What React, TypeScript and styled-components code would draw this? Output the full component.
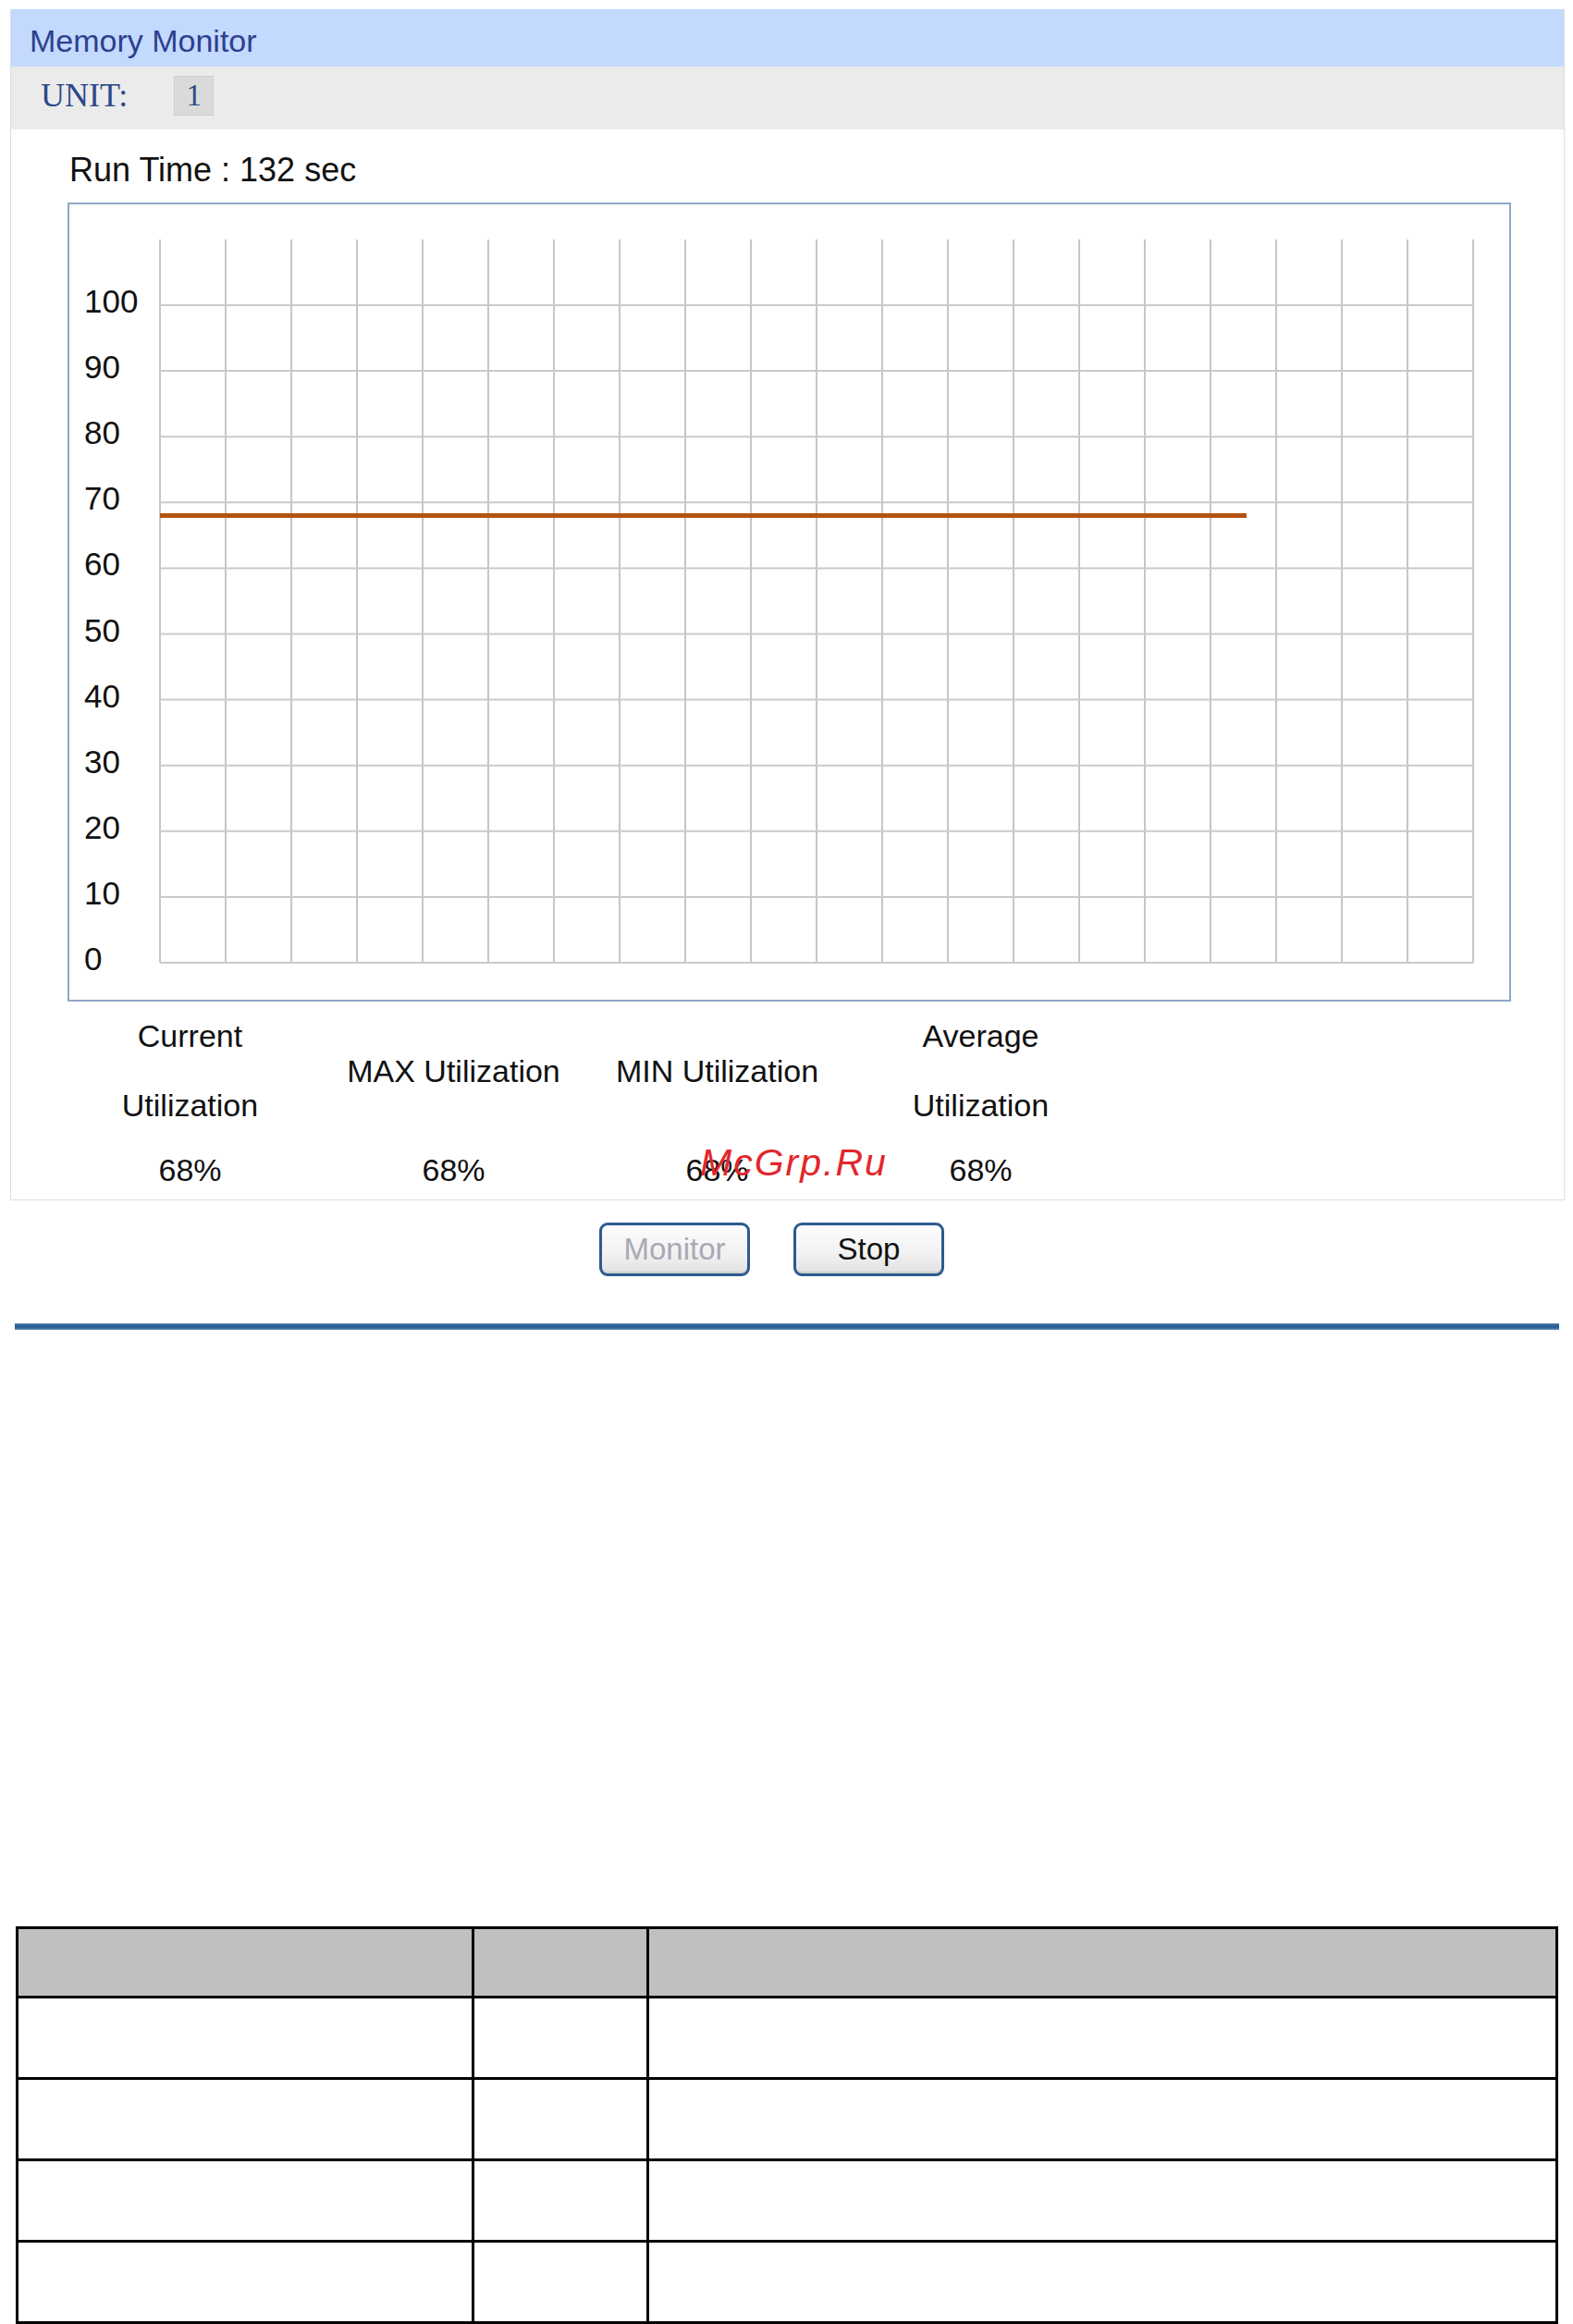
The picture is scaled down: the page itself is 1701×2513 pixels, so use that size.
import React from 'react';
import styled, { createGlobalStyle } from 'styled-components';

const GlobalStyle = createGlobalStyle`
  html, body {
    margin: 0;
    padding: 0;
    background: #ffffff;
  }
  body {
    font-family: "Liberation Sans", Arial, sans-serif;
    color: #111111;
  }
`;

const Page = styled.div`
  width: 1701px;
  height: 2513px;
  padding-top: 10px;
  box-sizing: border-box;
`;

const Panel = styled.section`
  margin-left: 11px;
  width: 1681px;
  border: 1px solid #dddddd;
  border-top: none;
  box-sizing: border-box;
`;

const TitleBar = styled.div`
  height: 62px;
  background: #c3d9fd;
  display: flex;
  align-items: center;
  padding: 6px 0 0 20px;
  box-sizing: border-box;
  font-size: 34px;
  color: #2d3f8e;
`;

const UnitBar = styled.div`
  height: 68px;
  background: #ebebeb;
  display: flex;
  align-items: center;
  padding: 0 0 6px 32px;
  box-sizing: border-box;
  font-family: "Liberation Serif", "Times New Roman", serif;
  font-size: 36px;
  color: #2c4a87;
`;

const UnitBox = styled.span`
  margin-left: 50px;
  width: 43px;
  height: 43px;
  display: flex;
  align-items: center;
  justify-content: center;
  background: #dadada;
  border: 1px solid #cfcfcf;
  box-sizing: border-box;
  font-size: 33px;
`;

const Body = styled.div`
  padding: 24px 0 0 0;
`;

const RunTime = styled.div`
  margin-left: 63px;
  font-size: 36px;
  line-height: 40px;
  height: 40px;
`;

const ChartBox = styled.div`
  margin: 15px 0 0 61px;
  width: 1561px;
  height: 864px;
  border: 2px solid #8ea8c8;
  box-sizing: border-box;
  background: #ffffff;

  svg {
    display: block;
  }
`;

const Stats = styled.div`
  position: relative;
  display: grid;
  grid-template-columns: repeat(4, 285px);
  grid-template-rows: 150px 64px;
  padding-left: 51px;
  font-size: 34px;
  text-align: center;
`;

const StatLabel = styled.div`
  display: flex;
  flex-direction: column;
  justify-content: center;
  line-height: 75px;
  white-space: nowrap;
`;

const StatValue = styled.div`
  line-height: 64px;
`;

const Watermark = styled.div`
  position: absolute;
  left: 745px;
  top: 154px;
  font-size: 41px;
  line-height: 40px;
  font-style: italic;
  letter-spacing: 2px;
  color: #e3262a;
  pointer-events: none;
`;

const ButtonRow = styled.div`
  display: flex;
  justify-content: center;
  gap: 47px;
  padding: 24px 32px 0 0;
`;

const Button = styled.button<{ $disabled?: boolean }>`
  width: 163px;
  height: 58px;
  border: 3px solid #2b5b8e;
  border-radius: 9px;
  background: linear-gradient(#fdfdfd, #f1f1f1 60%, #e1e1e1);
  box-shadow: inset 0 -2px 0 #d0d0d0;
  font-family: "Liberation Sans", Arial, sans-serif;
  font-size: 33px;
  color: ${p => (p.$disabled ? '#a9a9b4' : '#111111')};
  padding: 0;
  cursor: ${p => (p.$disabled ? 'default' : 'pointer')};
`;

const Rule = styled.div`
  margin: 51px 0 0 16px;
  width: 1670px;
  height: 7px;
  background: linear-gradient(#5d88b3, #2c6296 30%, #2c6296 70%, #6e97bf);
`;

const DataTable = styled.table`
  margin: 645px 0 0 17px;
  width: 1656px;
  border-collapse: collapse;
  table-layout: fixed;
`;

const HeadCell = styled.th<{ $w: number }>`
  width: ${p => p.$w}px;
  height: 72px;
  background: #c0c0c0;
  border: 3px solid #000000;
  padding: 0;
`;

const Cell = styled.td`
  height: 85px;
  border: 3px solid #000000;
  padding: 0;
`;

const W = 1557;
const H = 860;
const X0 = 98;
const CELL = 71;
const COLS = 20;
const Y0 = 820;
const STEP = 71.1;
const TOP = 38;

function UsageChart({ value, end }: { value: number; end: number }) {
  const x1 = X0 + COLS * CELL;
  const ticks = Array.from({ length: 11 }, (_, i) => i * 10);
  const y = Y0 - (value / 10) * STEP;
  return (
    <svg width={W} height={H} viewBox={`0 0 ${W} ${H}`}>
      {Array.from({ length: COLS + 1 }, (_, i) => (
        <line
          key={`v${i}`}
          x1={X0 + i * CELL}
          x2={X0 + i * CELL}
          y1={TOP}
          y2={Y0}
          stroke="#c6c6c6"
          strokeWidth={2}
        />
      ))}
      {ticks.map(t => {
        const ty = Y0 - (t / 10) * STEP;
        return (
          <g key={t}>
            <line x1={X0} x2={x1} y1={ty} y2={ty} stroke="#cacaca" strokeWidth={2} />
            <text
              x={16}
              y={ty + 8}
              fontSize={35}
              fontFamily='"Liberation Sans", Arial, sans-serif'
              fill="#111111"
            >
              {t}
            </text>
          </g>
        );
      })}
      <line x1={X0} x2={end} y1={y} y2={y} stroke="#b4530b" strokeWidth={5} />
    </svg>
  );
}

const stats = [
  { label: ['Current', 'Utilization'], value: '68%' },
  { label: ['MAX Utilization'], value: '68%' },
  { label: ['MIN Utilization'], value: '68%' },
  { label: ['Average', 'Utilization'], value: '68%' },
];

export default function App() {
  return (
    <Page>
      <GlobalStyle />
      <Panel>
        <TitleBar>Memory Monitor</TitleBar>
        <UnitBar>
          UNIT:
          <UnitBox>1</UnitBox>
        </UnitBar>
        <Body>
          <RunTime>Run Time : 132 sec</RunTime>
          <ChartBox>
            <UsageChart value={68} end={1273} />
          </ChartBox>
          <Stats>
            {stats.map(s => (
              <StatLabel key={s.label.join(' ')}>
                {s.label.map(l => (
                  <span key={l}>{l}</span>
                ))}
              </StatLabel>
            ))}
            {stats.map((s, i) => (
              <StatValue key={i}>{s.value}</StatValue>
            ))}
            <Watermark>McGrp.Ru</Watermark>
          </Stats>
        </Body>
      </Panel>
      <ButtonRow>
        <Button $disabled disabled>
          Monitor
        </Button>
        <Button>Stop</Button>
      </ButtonRow>
      <Rule />
      <DataTable>
        <thead>
          <tr>
            <HeadCell $w={490} />
            <HeadCell $w={186} />
            <HeadCell $w={980} />
          </tr>
        </thead>
        <tbody>
          {[0, 1, 2, 3].map(r => (
            <tr key={r}>
              <Cell />
              <Cell />
              <Cell />
            </tr>
          ))}
        </tbody>
      </DataTable>
    </Page>
  );
}
